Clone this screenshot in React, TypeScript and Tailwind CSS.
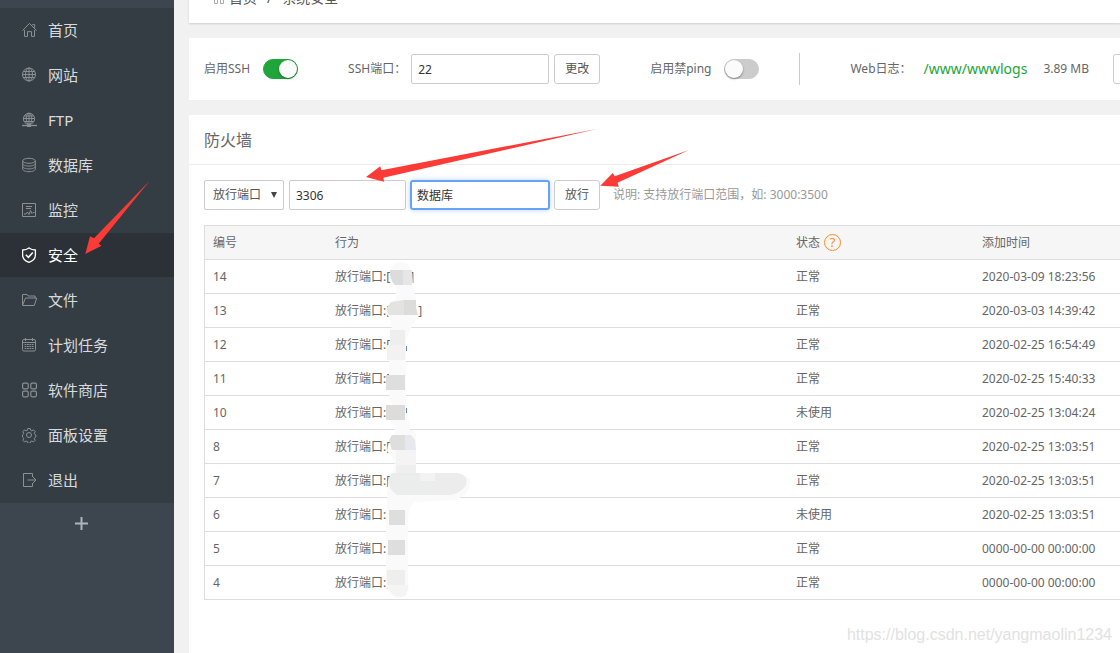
import React, { useState } from "react";

type NavEntry = { label: string; icon: React.ReactNode; active?: boolean };

function Icon({ children }: { children: React.ReactNode }) {
  return (
    <svg viewBox="0 0 16 16" className="size-4 shrink-0" fill="none" stroke="currentColor" strokeWidth="1" aria-hidden="true">
      {children}
    </svg>
  );
}

const nav: NavEntry[] = [
  {
    label: "首页",
    icon: (
      <Icon>
        <path d="M.5 8.600 7.500 1.400l7 7.200M10.300 2.600h2.400v3.200M2.500 8v6.400h3V9.600h4v4.800h3V8" />
      </Icon>
    ),
  },
  {
    label: "网站",
    icon: (
      <Icon>
        <circle cx="7" cy="7.500" r="6.500" />
        <ellipse cx="7" cy="7.500" rx="3.500" ry="6.500" />
        <path d="M7 1v13M.5 7.500h13M1.500 4.500h11M1.500 10.500h11" />
      </Icon>
    ),
  },
  {
    label: "FTP",
    icon: (
      <Icon>
        <circle cx="7" cy="6.800" r="5.600" />
        <ellipse cx="7" cy="6.800" rx="2.800" ry="5.600" />
        <path d="M7 1.200v11M1.400 6.500h11.200M2.200 4h9.600M2.200 9.500h9.600" />
        <path d="M0 13.500h15" strokeWidth="1.400" />
        <path d="M5 13.700h4" strokeWidth="2.600" />
      </Icon>
    ),
  },
  {
    label: "数据库",
    icon: (
      <Icon>
        <ellipse cx="7" cy="3.800" rx="6.300" ry="2.500" />
        <path d="M.7 3.800v8.400c0 1.400 2.800 2.500 6.300 2.500s6.300-1.100 6.300-2.500V3.800M.7 6.600c0 1.400 2.800 2.500 6.300 2.500s6.300-1.100 6.300-2.500M.7 9.400c0 1.400 2.800 2.500 6.300 2.500s6.300-1.100 6.300-2.500" />
      </Icon>
    ),
  },
  {
    label: "监控",
    icon: (
      <Icon>
        <path d="M.5 1.500h13v13H.5zM4 4.500h6M4 6.500h5M2 12h2l1.500-2L7 12.500l1.500-4 1.500 3 1-1h1.500" />
      </Icon>
    ),
  },
  {
    label: "安全",
    active: true,
    icon: (
      <Icon>
        <path d="M7 .9c1.900 1.400 4.100 2 6.400 2.100v5c0 3.600-2.700 6-6.400 7.300C3.300 14 .6 11.600.6 8V3C2.900 2.900 5.100 2.300 7 .9z" strokeWidth="1.300" />
        <path d="m3.800 7.700 2.600 2.600 4.400-4.700" strokeWidth="1.500" />
      </Icon>
    ),
  },
  {
    label: "文件",
    icon: (
      <Icon>
        <path d="M.5 13.300V2.500h4.600l1 1.500h7v2M.5 13.500h11.800L14.700 6H3.500L.7 13" />
      </Icon>
    ),
  },
  {
    label: "计划任务",
    icon: (
      <Icon>
        <rect x=".5" y="2.500" width="13" height="11.500" rx="1.500" />
        <path d="M.5 5.500h13M3.500 1v3M10.500 1v3" />
        <path d="M2.600 7.500h9M2.600 9.500h9M2.600 11.500h9" strokeDasharray="1.800 .6" />
      </Icon>
    ),
  },
  {
    label: "软件商店",
    icon: (
      <Icon>
        <rect x=".6" y="1.200" width="5.600" height="5.600" rx="1.200" strokeWidth="1.200" />
        <rect x="8.800" y="1.200" width="5.600" height="5.600" rx="1.200" strokeWidth="1.200" />
        <rect x=".6" y="9.200" width="5.600" height="5.600" rx="1.200" strokeWidth="1.200" />
        <rect x="8.800" y="9.200" width="5.600" height="5.600" rx="1.200" strokeWidth="1.200" />
      </Icon>
    ),
  },
  {
    label: "面板设置",
    icon: (
      <Icon>
        <circle cx="7" cy="8" r="2.500" />
        <path d="M5.800 1.500h2.400l.5 1.800 1.200.5 1.700-.9 1.600 1.700-.9 1.600.5 1.200 1 .5v2l-1 .6-.5 1.200.9 1.600-1.600 1.600-1.700-.9-1.200.5-.5 1.700H5.800l-.5-1.700-1.200-.5-1.700.9L.8 13.300l.9-1.600-.5-1.200-.7-.6v-2l.7-.5.500-1.200-.9-1.600 1.600-1.700 1.700.9 1.200-.5z" />
      </Icon>
    ),
  },
  {
    label: "退出",
    icon: (
      <Icon>
        <path d="M10.500 5V1.500H1.500v13h9V11M5.500 8H14M11 5l3 3-3 3" />
      </Icon>
    ),
  },
];

const rules = [
  { id: 14, gap: "w-5", status: "正常", time: "2020-03-09 18:23:56" },
  { id: 13, gap: "w-7", status: "正常", time: "2020-03-03 14:39:42" },
  { id: 12, status: "正常", time: "2020-02-25 16:54:49" },
  { id: 11, status: "正常", time: "2020-02-25 15:40:33" },
  { id: 10, status: "未使用", time: "2020-02-25 13:04:24" },
  { id: 8, status: "正常", time: "2020-02-25 13:03:51" },
  { id: 7, status: "正常", time: "2020-02-25 13:03:51" },
  { id: 6, status: "未使用", time: "2020-02-25 13:03:51" },
  { id: 5, status: "正常", time: "0000-00-00 00:00:00" },
  { id: 4, status: "正常", time: "0000-00-00 00:00:00" },
];

function Switch({ id, label, initial }: { id: string; label: string; initial: boolean }) {
  const [on, setOn] = useState(initial);
  return (
    <div className="flex shrink-0 items-center gap-[13px]">
      <label htmlFor={id}>{label}</label>
      <input
        id={id}
        type="checkbox"
        role="switch"
        checked={on}
        onChange={(e) => setOn(e.target.checked)}
        className="h-5 w-[35px] cursor-pointer appearance-none rounded-full border border-[#ccc] bg-[#ccc] before:block before:size-[18px] before:rounded-full before:bg-[#fbfbfb] before:shadow-[0_1px_2px_rgba(0,0,0,0.4)] checked:border-[#20a53a] checked:bg-[#20a53a] checked:before:ml-[15px]"
      />
    </div>
  );
}

function Redaction() {
  return (
    <svg className="pointer-events-none absolute top-9 left-[180px]" width="90" height="340" viewBox="384 261 90 340" aria-hidden="true">
      <path
        d="M390 273q1-11 11-11 9 0 11 11l1 12 3 15q4 14-6 30l-4 10v60l4 30q6 0 6 6v40q50-6 54 4 1 15-16 20l-40 2q-7 8-6 20v60l1 5q-1 11-10 11-11-1-13-15v-60l2-42 7-16v-4l-8-10 1-6 7-8v-12l-6-5v-10l4-4-4-8v-50l3-15-1-13-5-7q1-10 10-14v-12z"
        fill="#fafafa"
      />
      <path d="M390 270h13v15h-8q-6-6-5-15z" fill="#dcdcdc" />
      <path d="M403 270h9v15h-9z" fill="#e6e6e6" />
      <path d="M404 300v15h-15q-5-6 2-13z" fill="#e3e3e2" />
      <path d="M404 300h12v8l2 7h-14z" fill="#dcdcdb" />
      <path d="M390 330h15v15h-15z" fill="#eeeeed" />
      <path d="M387 345h18v15h-18z" fill="#f2f2f2" />
      <path d="M406 346h1v5h-1zM406 408h1v5h-1z" fill="#6b84bd" />
      <path d="M386 375h19v15h-19z" fill="#dedede" />
      <path d="M386 405h19v15h-19z" fill="#dcdcda" />
      <path d="M392 435h13v15h-13l-3-10z" fill="#dedede" />
      <path d="M405 435h6l4 5 1 10h-11z" fill="#e5e8ed" />
      <path d="M396 450h20v15h-20z" fill="#f4f4f4" />
      <path d="M396 465h20v8h-20z" fill="#efefef" />
      <path d="M392 473h43v22h-38q-14-10-5-22z" fill="#ebedec" />
      <path d="M420 473h15v8h-15z" fill="#f3f3f3" />
      <path d="M435 473h22q12 2 9 12-5 8-16 10h-15z" fill="#ececec" />
      <path d="M389 510h16v15h-16zM388 540h17v15h-17z" fill="#dedede" />
      <path d="M387 570h18v15h-18z" fill="#eeeeec" />
      <path d="M388 585h20q0 12-8 12-10-1-12-12z" fill="#f4f4f4" />
    </svg>
  );
}

export default function App() {
  const button =
    "h-[30px] shrink-0 cursor-pointer rounded-[3px] border border-[#ccc] bg-white px-[10px] text-[#555]";
  const field = "h-[30px] shrink-0 rounded-[2px] border border-[#ccc] bg-white px-[6px] text-[#333] outline-none";
  return (
    <div className="relative flex h-screen overflow-hidden bg-[#f1f1f1] font-['Noto_Sans','Noto_Sans_CJK_SC',sans-serif] text-xs text-[#666]">
      <aside className="w-[174px] shrink-0 bg-[#3d454e] pt-2">
        <nav>
          <ul className="bg-[#353d44]">
            {nav.map((item) => (
              <li key={item.label} className="pb-px">
                <a
                  href="#"
                  aria-current={item.active ? "page" : undefined}
                  className={
                    item.active
                      ? "flex h-11 items-center gap-[10px] bg-[#2c3138] pl-[22px] text-[15px] text-white"
                      : "flex h-11 items-center gap-[10px] pl-[22px] text-[15px] text-[#d8dbdd]"
                  }
                >
                  <span className={item.active ? "text-white" : "text-[#8b9093]"}>{item.icon}</span>
                  {item.label}
                </a>
              </li>
            ))}
          </ul>
        </nav>
        <button type="button" aria-label="添加" className="flex h-10 w-full cursor-pointer items-center justify-center pr-[11px] text-[#b0b4b8]">
          <svg viewBox="0 0 13 13" className="size-[13px]" fill="none" stroke="currentColor" strokeWidth="2" aria-hidden="true">
            <path d="M6.500 0v13M0 6.500h13" />
          </svg>
        </button>
      </aside>

      <main className="flex min-w-0 flex-1 flex-col gap-[15px] pl-[15px]">
        <header className="-mt-[27px] flex h-[50px] shrink-0 items-center bg-white pl-6 text-sm text-[#555] shadow-[0_1px_2px_rgba(0,0,0,0.15)]">
          <a href="#" className="flex items-center gap-1">
            <svg viewBox="0 0 12 12" className="size-3" fill="none" stroke="#aaa" aria-hidden="true">
              <path d="M1.500.5h3v4h-3zM7.500.5h3v4h-3zM1.500 7.500h3v4h-3zM7.500 7.500h3v4h-3z" />
            </svg>
            首页
          </a>
          <span className="px-[10px]">/</span>
          <span>系统安全</span>
        </header>

        <section className="flex h-[62px] shrink-0 items-center overflow-hidden bg-white pl-[15px]">
          <Switch id="ssh" label="启用SSH" initial={true} />
          <div className="ml-[50px] flex shrink-0 items-center gap-[5px]">
            <label htmlFor="ssh-port">SSH端口：</label>
            <input id="ssh-port" defaultValue="22" className={field + " w-[138px]"} />
            <button type="button" className={button}>更改</button>
          </div>
          <div className="ml-[50px] shrink-0">
            <Switch id="ping" label="启用禁ping" initial={false} />
          </div>
          <div className="ml-10 h-8 w-px shrink-0 bg-[#ccc]" />
          <div className="ml-[50px] flex shrink-0 items-center">
            <span>Web日志：</span>
            <a href="#" className="ml-3 text-sm text-[#20a53a]">/www/wwwlogs</a>
            <span className="ml-4">3.89 MB</span>
          </div>
          <button type="button" className={button + " ml-6"}>清空</button>
        </section>

        <section className="flex-1 bg-white">
          <h1 className="flex h-[50px] items-center border-b border-[#ececec] pl-[15px] text-base text-[#666]">防火墙</h1>
          <div className="pt-[15px] pl-[15px]">
            <form className="flex items-center gap-[5px]" onSubmit={(e) => e.preventDefault()}>
              <div className="relative shrink-0">
                <select aria-label="类型" className="h-[30px] w-20 appearance-none rounded-[2px] border border-[#ccc] bg-white pl-2 text-[#555]">
                  <option>放行端口</option>
                  <option>屏蔽IP</option>
                </select>
                <svg viewBox="0 0 6 6" className="pointer-events-none absolute top-3 right-[7px] size-[6px]" fill="#444" aria-hidden="true">
                  <path d="M0 0h6L3 6z" />
                </svg>
              </div>
              <input aria-label="端口" defaultValue="3306" className={field + " w-[117px]"} />
              <input
                aria-label="备注"
                defaultValue="数据库"
                className="h-7 w-[138px] shrink-0 rounded-[2px] border border-[#66a3f7] bg-white px-[5px] text-[#333] shadow-[0_0_6px_rgba(77,144,254,0.5)] ring-1 ring-[#66a3f7] outline-none"
              />
              <button type="submit" className={button}>放行</button>
              <span className="ml-2 shrink-0 text-[#999]">说明: 支持放行端口范围，如: 3000:3500</span>
            </form>

            <div className="relative mt-[15px]">
              <table className="w-full table-fixed border-separate border-spacing-0 border-t border-l border-[#ddd] text-left">
                <colgroup>
                  <col className="w-[122px]" />
                  <col />
                  <col className="w-[186px]" />
                  <col className="w-[146px]" />
                </colgroup>
                <thead className="bg-[#f6f6f6]">
                  <tr className="h-[34px]">
                    <th className="border-b border-[#ddd] px-2 font-normal">编号</th>
                    <th className="border-b border-[#ddd] px-2 font-normal">行为</th>
                    <th className="border-b border-[#ddd] px-2 font-normal">
                      <span className="flex items-center gap-1">
                        状态
                        <a href="#" aria-label="帮助" className="flex size-[17px] items-center justify-center rounded-full border border-[#ff8c1a] text-[13px] leading-none text-[#ff8c1a]">?</a>
                      </span>
                    </th>
                    <th className="border-b border-[#ddd] px-2 font-normal">添加时间</th>
                  </tr>
                </thead>
                <tbody>
                  {rules.map((r) => (
                    <tr key={r.id} className="h-[34px]">
                      <td className="border-b border-[#ddd] px-2">{r.id}</td>
                      <td className="border-b border-[#ddd] px-2">
                        放行端口:[
                        {r.gap && (
                          <>
                            <span className={"inline-block " + r.gap} />]
                          </>
                        )}
                      </td>
                      <td className="border-b border-[#ddd] px-2">{r.status}</td>
                      <td className="border-b border-[#ddd] px-2 whitespace-nowrap">{r.time}</td>
                    </tr>
                  ))}
                </tbody>
              </table>
              <Redaction />
            </div>
          </div>
        </section>
      </main>

      <svg className="pointer-events-none absolute top-0 left-0" width="700" height="270" viewBox="0 0 700 270" fill="#fc3a36" aria-hidden="true">
        <path d="M85.300 254 90 236.300l4 2L149.500 181 98.700 243.700l2.800 2z" />
        <path d="M366 177l14.300-10.700 1 3.900L597 129 383.300 177.700l.9 4z" />
        <path d="M600.300 185.700 612.700 173l2 3.200L689 150 617.500 182.800l1.400 4z" />
      </svg>
      <div className="pointer-events-none absolute right-2 bottom-2 font-['Liberation_Sans',sans-serif] text-base leading-5 text-[#e2e2e2]">
        https://blog.csdn.net/yangmaolin1234
      </div>
    </div>
  );
}
